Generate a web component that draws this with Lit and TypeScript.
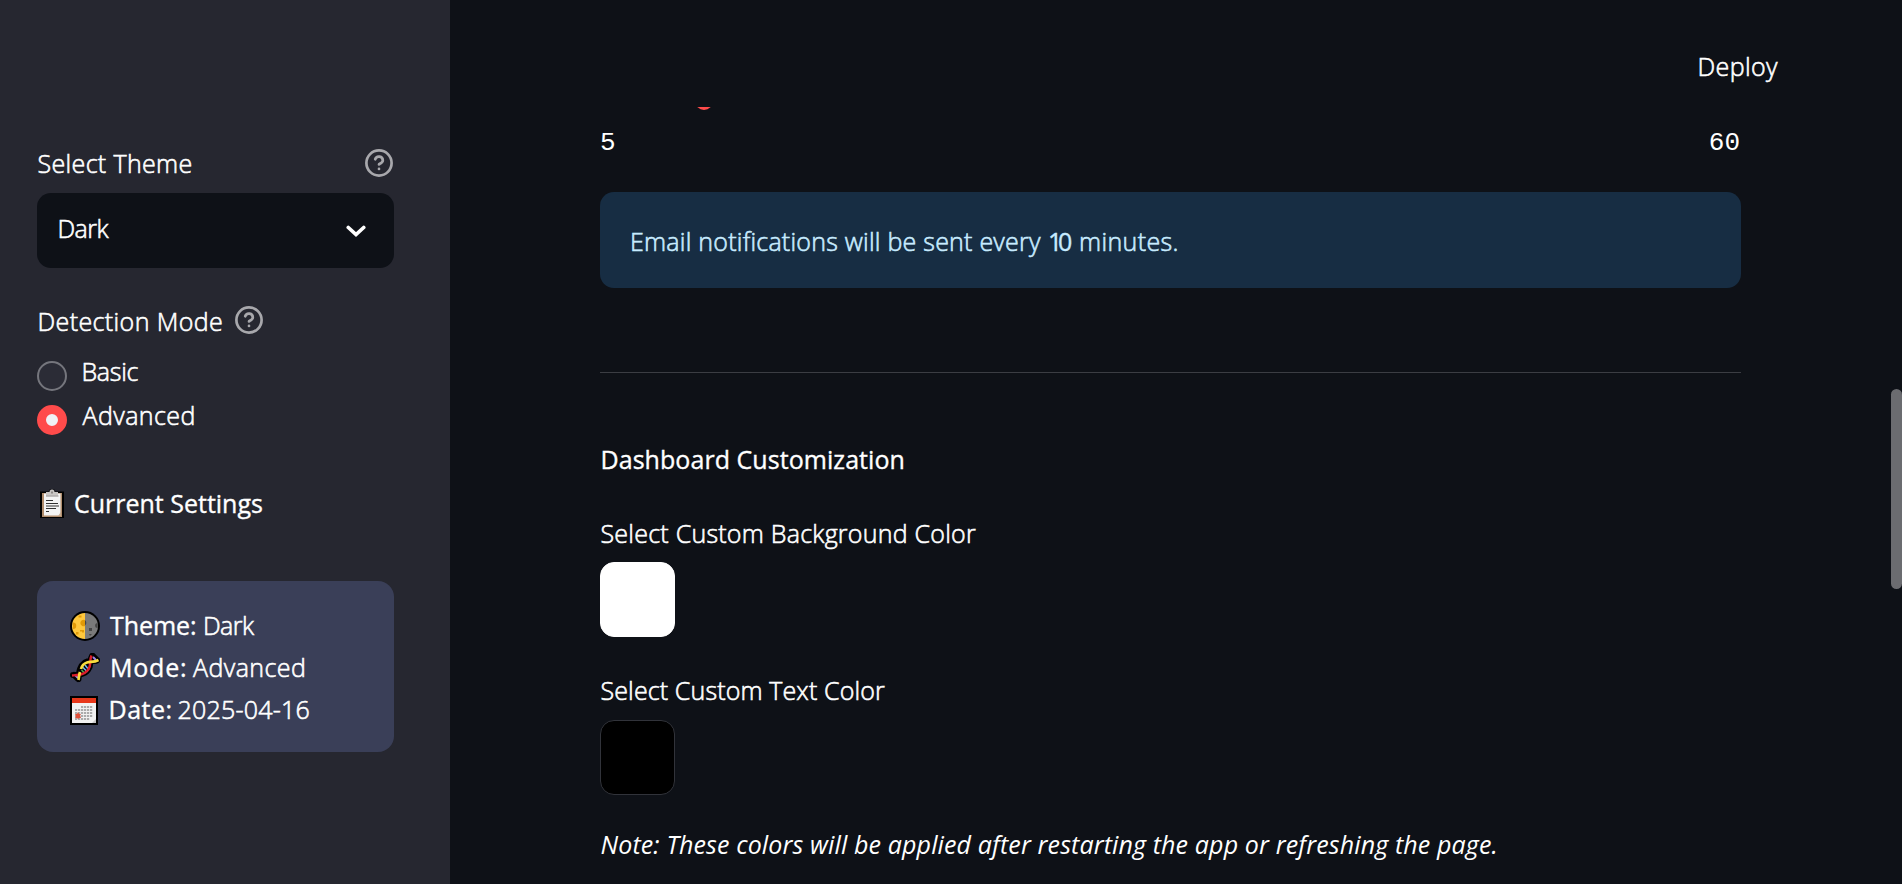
import { LitElement, html, css, svg } from "lit";
import { customElement, property } from "lit/decorators.js";
import { styleMap } from "lit/directives/style-map.js";

const FACES: Record<string, string> = {
  regular: "300 25px 'Open Sans'",
  bold: "500 25px 'Open Sans'",
  italic: "italic 400 25px 'Open Sans'",
};

/** One line of text, tracked so that its ink fills a given width. */
@customElement("fit-text")
class FitText extends LitElement {
  @property() text = "";
  @property() face = "regular";
  @property({ type: Number }) w = 0;

  static styles = css`
    :host { display: block; flex: none; height: 40px; }
    .t { display: block; white-space: pre; font-kerning: normal; }
    .regular { font: 300 25px/41px "Open Sans", sans-serif; -webkit-text-stroke: 0.6px currentColor; }
    .bold { font: 500 25px/41px "Open Sans", sans-serif; -webkit-text-stroke: 0.35px currentColor; }
    .italic { font: italic 400 25px/41px "Open Sans", sans-serif; }
  `;

  render() {
    const ctx = document.createElement("canvas").getContext("2d")!;
    ctx.font = FACES[this.face];
    const m = ctx.measureText(this.text);
    const ink = m.actualBoundingBoxRight + m.actualBoundingBoxLeft;
    const stem = /^[DBME]/.test(this.text) ? 1 : 0;
    const track = (this.w - stem - ink) / (this.text.length - 1);
    return html`<span class="t ${this.face}" style=${styleMap({
      width: `${this.w}px`,
      textIndent: `${m.actualBoundingBoxLeft + stem}px`,
      letterSpacing: `${track}px`,
    })}>${this.text}</span>`;
  }
}

const help = html`<svg class="help" width="28" height="28" viewBox="0 0 28 28" fill="none" stroke="#a8a8ac"
  stroke-width="2.700" stroke-linecap="round" stroke-linejoin="round">
  <circle cx="14" cy="14" r="12.600"/>
  <path d="M10.200 10.300a3.900 3.900 0 0 1 7.600 1.300c0 2.500-3.800 3.300-3.800 3.800"/><path d="M14 19.900h.01"/></svg>`;

const clipboard = html`<svg width="24" height="30" viewBox="0 0 24 30">
  <path d="M0 2.500H9.500V.5h5v2H24V29H0z" fill="#000"/>
  <rect x="2" y="4" width="20" height="24" fill="#b08d6d"/>
  <rect x="4" y="4.500" width="16.500" height="22" fill="#f4f4f4"/>
  <path d="M6 3h3.500a2.500 2.500 0 0 1 5 0H18v3.500H6z" fill="#c9c6c4"/><path d="M11 2.500h2v2h-2zM6 6.500h12.500v1H6z" fill="#8b8886"/>
  <path d="M6 11.500h7M6 14.500h12M6 17h13M6 19.500h10M6 22.500h3" stroke="#333" stroke-width="1"/>
  <path d="M18 27l3-4v4z" fill="#c6ab90"/></svg>`;

const moon = html`<svg width="30" height="30" viewBox="0 0 30 30">
  <circle cx="15" cy="15" r="15" fill="#000"/>
  <path d="M15 2a13 13 0 0 0 0 26z" fill="#ffc83d"/><path d="M15 2a13 13 0 0 1 0 26z" fill="#7a7a7a"/>
  <path d="M15 9a3.300 3.300 0 1 0 0 6zM3 11.500a2.500 2.500 0 0 1 0 6.500zM8.500 4.500h3v2h-3zM10 19h4v2.500h-2v-1h-2zM6 21h2.500v2.500H6z" fill="#e19a08"/>
  <path d="M15 9.200a3 3 0 0 1 0 5zM27.600 12a2.500 2.500 0 0 0 0 5zM19 17h3v3h-3zM19 23h3l-2 2z" fill="#464646"/></svg>`;

const dna = html`<svg width="30" height="30" viewBox="0 0 30 30" fill="none">
  <g stroke="#000" stroke-width="6" stroke-linecap="round" stroke-linejoin="round">
    <path d="M3 22C8 22 14 22 18 17S19 8 22 3M8.500 26C9 18 10 13 15 9.500S24 9.500 27 7.500M23 3l4 4M4 22l4 4"/></g>
  <path d="M12 14l6 6M15 11l5 5" stroke="#000" stroke-width="5"/>
  <path d="M12.500 14l5 5M15 12l4 5" stroke="#6db5f3" stroke-width="1.500"/><path d="M11.500 17l3 3" stroke="#4cae4f" stroke-width="1.500"/>
  <path d="M5.500 22.500l2.500 2.500M23 4l3 3" stroke="#9d87e8" stroke-width="2"/>
  <path d="M2 22.500C8 22 14 22 18 17S19 8 21.500 2.500" stroke="#da1f2b" stroke-width="2.500"/>
  <path d="M8.500 27C9 23 9 22 10 19M11 16C12 12 14 10.500 17 9.500S24 9.500 28.500 7" stroke="#f9dc3e" stroke-width="2.700"/></svg>`;

const calendar = html`<svg width="28" height="29" viewBox="0 0 28 29">
  <path d="M0 0h28v29H0z" fill="#000"/><path d="M2 2h24v25H2z" fill="#f2f2f2"/><path d="M2 2h24v5H2z" fill="#e8381b"/>
  ${[10, 13, 16, 19, 22].map((y, r) =>
    [5, 8, 11, 14, 17, 20].map((x, c) =>
      (r === 0 && c < 2) || (r === 4 && c > 4) ? "" : svg`<rect x=${x} y=${y} width="2.200" height="2" fill="#ababab"/>`))}
  <path d="M8 16l1 2h2l-1 1.500 1 2.500H9l-1 1-1-1H5l1-2-1-2h2z" fill="#e0503a"/>
  <path d="M26 23v4h-4z" fill="#c8c8c8"/></svg>`;

@customElement("app-root")
class AppRoot extends LitElement {
  static styles = css`
    :host { display: block; height: 884px; overflow: hidden; background: #0e1117; color: #fff; }
    .page { display: grid; grid-template-columns: 450px 1fr; height: 100%; position: relative; }
    svg { display: block; flex: none; }
    .side { background: #262730; padding: 143px 56px 0 37px; }
    .row { display: flex; align-items: center; height: 40px; }
    .ink { padding-left: 1.5px; }
    .between { justify-content: space-between; padding-right: 1px; }
    .select { box-sizing: border-box; height: 75px; margin-top: 10px; border-radius: 14px; background: #0e1117;
      display: flex; align-items: center; justify-content: space-between; padding: 0 28px 5px 21.5px; }
    .select svg { margin-top: 6px; }
    .mode { margin-top: 33px; gap: 13px; }
    .mode .help { margin-top: -2px; }
    .options { display: grid; gap: 4px; margin-top: 10px; }
    .option { display: flex; align-items: flex-end; height: 40px; gap: 15.5px; }
    .radio { box-sizing: border-box; width: 30px; height: 30px; border-radius: 50%; border: 2px solid #75767d; background: #2b2c36; flex: none; }
    .radio.on { border: 9px solid #ff4b4b; background: #f0f2f6; }
    .current { margin-top: 48px; padding-left: 3px; gap: 11px; }
    .current svg { margin-top: 2px; }
    .card { box-sizing: border-box; height: 171px; margin-top: 58px; border-radius: 16px; background: #3a3f58; padding: 23px 0 0 33px; }
    .fact { display: flex; align-items: center; height: 42px; }
    .fact svg { margin-top: 2px; }
    .fact .slot { width: 30px; }
    .main { padding: 0 161px 0 150px; }
    header { box-sizing: border-box; height: 107px; padding-top: 46px; display: flex; justify-content: flex-end; margin-right: -37px; }
    .track { position: relative; height: 21px; overflow: hidden; }
    .thumb { position: absolute; left: 94.5px; top: -15px; width: 18px; height: 18px; border-radius: 50%; background: #ff4b4b; }
    .ticks { display: flex; justify-content: space-between; font: 26px/30px "Liberation Mono", monospace; height: 30px; padding-right: 1px; }
    .info { box-sizing: border-box; height: 96px; margin-top: 34px; border-radius: 14px; background: #172d43; color: #c7ebff;
      display: flex; gap: 9px; padding: 29px 0 0 31px; }
    hr { margin: 84px 0 66px; border: 0; height: 1px; background: #3b3d43; }
    .swatch { box-sizing: border-box; width: 75px; height: 75px; border-radius: 14px; border: 1px solid #31333a; }
    .white { background: #fff; border-color: #fff; margin: 9px 0 33px; }
    .black { background: #000; margin: 10px 0 29px; }
    .gap { height: 34px; }
    .scroll { position: absolute; right: 0; top: 389px; width: 11px; height: 200px; border-radius: 6px; background: #6b6c70; }
  `;

  render() {
    const t = (text: string, w: number, face = "regular") =>
      html`<fit-text .text=${text} .w=${w} .face=${face}></fit-text>`;
    return html`<div class="page">
      <aside class="side">
        <div class="row between ink">${t("Select Theme", 153)}${help}</div>
        <div class="select">${t("Dark", 51)}
          <svg width="20" height="13" viewBox="0 0 20 13" fill="none" stroke="#fff" stroke-width="3.700" stroke-linecap="round"><path d="M2.300 2.500L10 9.500l7.700-7"/></svg>
        </div>
        <div class="row mode ink">${t("Detection Mode", 183.5)}${help}</div>
        <div class="options">
          <div class="option"><span class="radio"></span>${t("Basic", 56)}</div>
          <div class="option"><span class="radio on"></span>${t("Advanced", 111)}</div>
        </div>
        <div class="row current">${clipboard}${t("Current Settings", 187, "bold")}</div>
        <div class="card">
          ${[
            { icon: moon, key: "Theme:", kw: 85, gap: 10, val: "Dark", vw: 51, vg: 9 },
            { icon: dna, key: "Mode:", kw: 74, gap: 11, val: "Advanced", vw: 111, vg: 8 },
            { icon: calendar, key: "Date:", kw: 61, gap: 9.5, val: "2025-04-16", vw: 130, vg: 8 },
          ].map((f) => html`<div class="fact"><span class="slot">${f.icon}</span>
            <fit-text style=${styleMap({ marginLeft: `${f.gap}px` })} .text=${f.key} .w=${f.kw} face="bold"></fit-text>
            <fit-text style=${styleMap({ marginLeft: `${f.vg}px` })} .text=${f.val} .w=${f.vw}></fit-text></div>`)}
        </div>
      </aside>
      <main class="main">
        <header>${t("Deploy", 79.5)}</header>
        <div class="track"><span class="thumb"></span></div>
        <div class="ticks"><span>5</span><span>60</span></div>
        <div class="info">${t("Email notifications will be sent every", 410)}${t("10", 22, "bold")}${t("minutes.", 95.5)}</div>
        <hr>
        <div class="row ink">${t("Dashboard Customization", 302, "bold")}</div>
        <div class="gap"></div>
        <div class="row ink">${t("Select Custom Background Color", 374.5)}</div>
        <div class="swatch white"></div>
        <div class="row ink">${t("Select Custom Text Color", 283.5)}</div>
        <div class="swatch black"></div>
        <div class="row ink">${t("Note: These colors will be applied after restarting the app or refreshing the page.", 894, "italic")}</div>
      </main>
      <div class="scroll"></div>
    </div>`;
  }
}
